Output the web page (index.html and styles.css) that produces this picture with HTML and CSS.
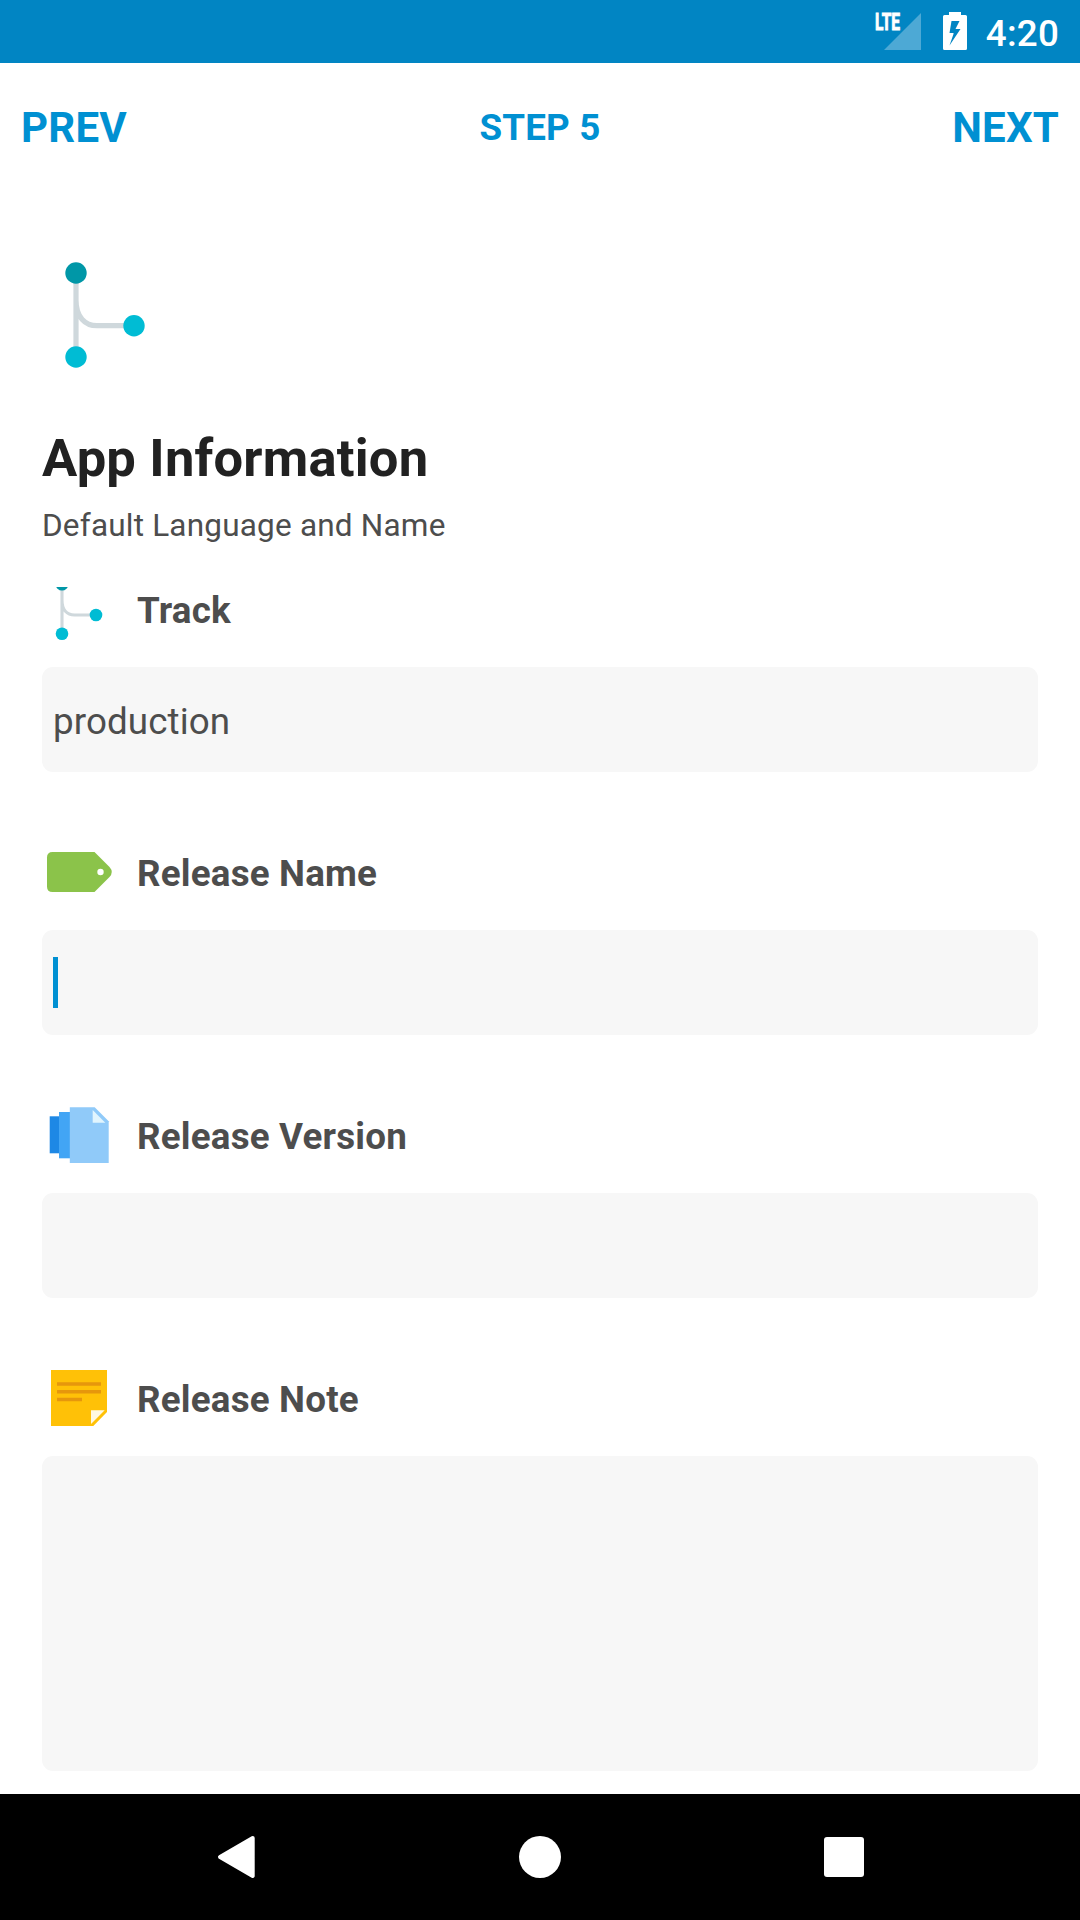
FILE: index.html
```html
<!DOCTYPE html>
<html lang="en">
<head>
<meta charset="utf-8">
<title>App Information</title>
<link rel="stylesheet" href="styles.css">
</head>
<body>
<header class="status">
  <svg class="signal" width="48" height="38" viewBox="0 0 48 38">
    <path d="M46 0V37H9Z" fill="#4da9d5"/>
    <text x="0" y="17" textLength="25" lengthAdjust="spacingAndGlyphs" class="lte">LTE</text>
  </svg>
  <svg class="battery" width="24" height="38" viewBox="0 0 24 38">
    <path fill="#fff" fill-rule="evenodd" d="M6 0H18V3H22.500Q24 3 24 4.500V36.500Q24 38 22.500 38H1.500Q0 38 0 36.500V4.500Q0 3 1.500 3H6ZM8.500 9L6.500 21H10.500V22L6.500 33.500L17.500 17H12.500L16.500 9Z"/>
  </svg>
  <span class="clock">4:20</span>
</header>
<nav class="steps">
  <span class="step-link">PREV</span>
  <span class="step-title">STEP 5</span>
  <span class="step-link next">NEXT</span>
</nav>
<main class="page">
  <svg class="hero" width="106" height="106" viewBox="0 0 106 106">
    <path d="M34 11V95M34 38C34 55 43 63.700 55 63.700H92" fill="none" stroke="#cfd8dc" stroke-width="5.200"/>
    <circle cx="34" cy="11" r="10.700" fill="#0097a7"/>
    <circle cx="34" cy="95" r="10.700" fill="#00bcd4"/>
    <circle cx="92" cy="63.700" r="10.700" fill="#00bcd4"/>
  </svg>
  <h1 class="title">App Information</h1>
  <p class="subtitle">Default Language and Name</p>

  <section class="field">
    <div class="label">
      <svg width="73" height="63" viewBox="0 0 73 63">
        <clipPath id="crop"><rect y="8" width="73" height="55"/></clipPath>
        <g clip-path="url(#crop)">
          <path d="M20 5V55M20 21C20 31 25 36 32.500 36H54" fill="none" stroke="#cfd8dc" stroke-width="3.100"/>
          <circle cx="20" cy="5.300" r="6.300" fill="#0097a7"/>
          <circle cx="20" cy="54.700" r="6.300" fill="#00bcd4"/>
          <circle cx="54" cy="36" r="6.300" fill="#00bcd4"/>
        </g>
      </svg>
      <span>Track</span>
    </div>
    <div class="input">production</div>
  </section>

  <section class="field">
    <div class="label">
      <svg width="73" height="63" viewBox="0 0 73 63">
        <path fill="#8bc34a" d="M10.500 10H52.500L67.500 25Q72 30 67.500 35L52.500 50H10.500Q5 50 5 44.500V15.500Q5 10 10.500 10Z"/>
        <circle cx="58.500" cy="30" r="3.200" fill="#fff"/>
      </svg>
      <span>Release Name</span>
    </div>
    <div class="input focused"><i class="caret"></i></div>
  </section>

  <section class="field">
    <div class="label">
      <svg width="73" height="63" viewBox="0 0 73 63">
        <path fill="#1e88e5" d="M7.700 11.300H18V48.300H7.700Z"/>
        <path fill="#42a5f5" d="M17 7H29V53.300H17Z"/>
        <path fill="#90caf9" d="M27.800 2.300H52.700L66.700 16.300V58H27.800Z"/>
        <path fill="#e1f5fe" d="M50.700 5V17.700H63.300Z"/>
      </svg>
      <span>Release Version</span>
    </div>
    <div class="input"></div>
  </section>

  <section class="field">
    <div class="label">
      <svg width="73" height="63" viewBox="0 0 73 63">
        <path fill="#ffc107" d="M9 2H65V44L51.300 58H9Z"/>
        <path fill="#fff8e1" d="M49 42.300H62.700L49 56Z"/>
        <path fill="#e6970c" d="M15 14.300H59V17.800H15ZM15 22H59V25.500H15ZM15 29.700H40V33.200H15Z"/>
      </svg>
      <span>Release Note</span>
    </div>
    <div class="input tall"></div>
  </section>
</main>
<footer class="navbar">
  <svg width="40" height="44" viewBox="0 0 40 44"><path d="M36.700 3L4 22L36.700 41Z" fill="#fff" stroke="#fff" stroke-width="4" stroke-linejoin="round"/></svg>
  <svg width="42" height="42" viewBox="0 0 42 42"><circle cx="21" cy="21" r="21" fill="#fff"/></svg>
  <svg width="40" height="40" viewBox="0 0 40 40"><rect width="40" height="40" rx="3" fill="#fff"/></svg>
</footer>
</body>
</html>
```
FILE: styles.css
```css
* { box-sizing: border-box; }
body {
  margin: 0;
  width: 1080px;
  height: 1920px;
  display: flex;
  flex-direction: column;
  overflow: hidden;
  background: #fff;
  color: #4d4d4d;
  font-family: Roboto, sans-serif;
  letter-spacing: .2px;
}
svg { display: block; flex: none; }
.status {
  flex: none;
  height: 63px;
  padding: 0 21px 0 0;
  display: flex;
  justify-content: flex-end;
  align-items: flex-start;
  background: #0185c3;
  color: #fff;
}
.signal { margin: 13px 20px 0 0; overflow: visible; }
.lte {
  font: 700 23px Roboto, sans-serif;
  letter-spacing: 0;
  fill: #fff;
  stroke: #fff;
  stroke-width: .9px;
}
.battery { margin: 12px 19px 0 0; }
.clock { margin-top: 12px; font-size: 36.75px; line-height: 43px; font-weight: 500; }
.steps {
  flex: none;
  height: 128px;
  padding: 2px 21px 0;
  display: grid;
  grid-template-columns: 1fr auto 1fr;
  align-items: center;
  color: #0090d2;
  font-weight: 700;
}
.step-link { font-size: 42px; line-height: 50px; }
.step-title { font-size: 36.75px; line-height: 44px; }
.next { text-align: right; }
.page { flex: 1; min-height: 0; padding: 71px 42px 0; }
.title {
  margin: 59px 0 0;
  font-size: 52.5px;
  line-height: 62px;
  font-weight: 700;
  color: #212121;
}
.subtitle { margin: 18px 0 0; font-size: 31.5px; line-height: 37px; }
.field { margin-bottom: 70px; }
.subtitle + .field { margin-top: 35px; }
.label {
  height: 63px;
  display: flex;
  align-items: center;
  gap: 22px;
  font-size: 36.75px;
  line-height: 43px;
  font-weight: 700;
}
.input {
  height: 105px;
  margin-top: 25px;
  padding: 3px 11px 0;
  display: flex;
  align-items: center;
  border-radius: 11px;
  background: #f7f7f7;
  font-size: 36.75px;
  letter-spacing: .1px;
}
.focused { padding-top: 0; }
.tall { height: 315px; }
.caret { width: 5px; height: 51px; background: #0090d2; }
.navbar {
  flex: none;
  height: 126px;
  padding: 0 216px;
  display: flex;
  justify-content: space-between;
  align-items: center;
  background: #000;
}
```
